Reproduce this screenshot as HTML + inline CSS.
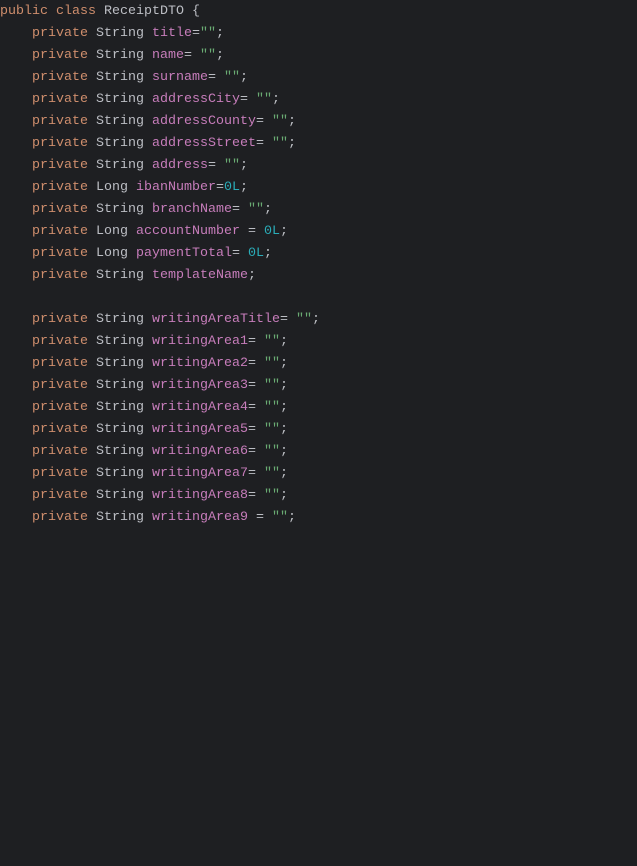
<!DOCTYPE html>
<html><head><meta charset="utf-8"><style>
html,body{margin:0;padding:0;background:#1e1f22;width:637px;height:866px;overflow:hidden}
pre{margin:0;padding:0;font-family:"Liberation Mono",monospace;font-size:13.33px;line-height:22px;color:#bcbec4;position:absolute;top:1px;left:0}
.k{color:#cf8e6d}.f{color:#c77dbb}.s{color:#6aab73}.n{color:#2aacb8}
</style></head><body><pre><span class="k">public class</span> ReceiptDTO {
    <span class="k">private</span> String <span class="f">title</span>=<span class="s">""</span>;
    <span class="k">private</span> String <span class="f">name</span>= <span class="s">""</span>;
    <span class="k">private</span> String <span class="f">surname</span>= <span class="s">""</span>;
    <span class="k">private</span> String <span class="f">addressCity</span>= <span class="s">""</span>;
    <span class="k">private</span> String <span class="f">addressCounty</span>= <span class="s">""</span>;
    <span class="k">private</span> String <span class="f">addressStreet</span>= <span class="s">""</span>;
    <span class="k">private</span> String <span class="f">address</span>= <span class="s">""</span>;
    <span class="k">private</span> Long <span class="f">ibanNumber</span>=<span class="n">0L</span>;
    <span class="k">private</span> String <span class="f">branchName</span>= <span class="s">""</span>;
    <span class="k">private</span> Long <span class="f">accountNumber</span> = <span class="n">0L</span>;
    <span class="k">private</span> Long <span class="f">paymentTotal</span>= <span class="n">0L</span>;
    <span class="k">private</span> String <span class="f">templateName</span>;

    <span class="k">private</span> String <span class="f">writingAreaTitle</span>= <span class="s">""</span>;
    <span class="k">private</span> String <span class="f">writingArea1</span>= <span class="s">""</span>;
    <span class="k">private</span> String <span class="f">writingArea2</span>= <span class="s">""</span>;
    <span class="k">private</span> String <span class="f">writingArea3</span>= <span class="s">""</span>;
    <span class="k">private</span> String <span class="f">writingArea4</span>= <span class="s">""</span>;
    <span class="k">private</span> String <span class="f">writingArea5</span>= <span class="s">""</span>;
    <span class="k">private</span> String <span class="f">writingArea6</span>= <span class="s">""</span>;
    <span class="k">private</span> String <span class="f">writingArea7</span>= <span class="s">""</span>;
    <span class="k">private</span> String <span class="f">writingArea8</span>= <span class="s">""</span>;
    <span class="k">private</span> String <span class="f">writingArea9</span> = <span class="s">""</span>;
</pre></body></html>
